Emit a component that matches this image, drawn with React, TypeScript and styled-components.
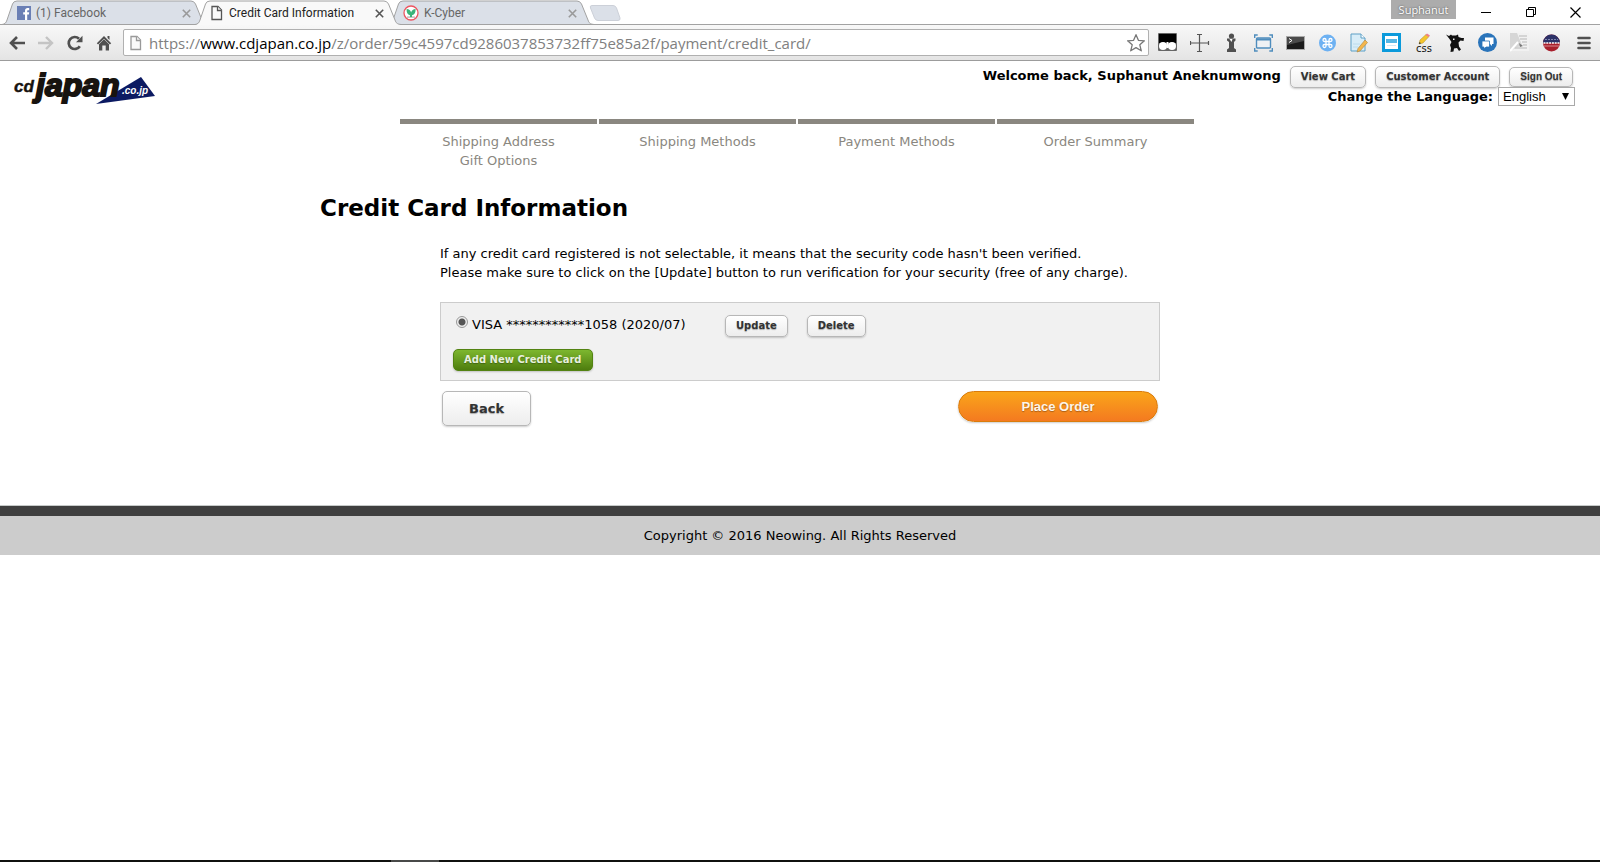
import React from 'react';
import styled, { createGlobalStyle, css } from 'styled-components';

const verdana = `Verdana, 'DejaVu Sans', sans-serif`;
const segoe = `'Segoe UI', 'Open Sans', 'Noto Sans', sans-serif`;
const arial = `Arial, 'Liberation Sans', sans-serif`;

const GlobalStyle = createGlobalStyle`
  *, *::before, *::after { box-sizing: border-box; }
  body { margin: 0; background: #fff; color: #000; font: 13px/19px ${verdana}; }
  button, select, input { margin: 0; font: inherit; }
  svg { display: block; flex: none; }
`;

const Screen = styled.div`
  display: flex;
  flex-direction: column;
  min-height: 100vh;
`;

/* ---------- browser chrome ---------- */

const TabStrip = styled.div`
  display: flex;
  height: 24px;
  padding: 0 2px;
  background: #fff;
  font: 12px/16px 'Segoe UI', Roboto, sans-serif;
`;

const TabBox = styled.div<{ $active?: boolean }>`
  position: relative;
  z-index: ${p => (p.$active ? 2 : 1)};
  display: flex;
  align-items: center;
  width: 193px;
  height: 25px;
  padding: 1px 1px 0 15px;
  gap: 5px;
  color: ${p => (p.$active ? '#222' : '#666')};
`;

const TabShape = styled.svg`
  position: absolute;
  z-index: -1;
  left: 0;
  top: 0;
`;

const TabTitle = styled.span`
  flex: 1;
  white-space: nowrap;
`;

const IconButton = styled.button`
  display: grid;
  place-items: center;
  width: 20px;
  height: 20px;
  padding: 0;
  border: 0;
  background: none;
  flex: none;
`;

const CloseButton = styled(IconButton)`
  width: 16px;
  height: 16px;
`;

const NewTab = styled(IconButton)`
  width: 32px;
  height: 16px;
  margin: 5px 0 0 8px;
`;

const WindowControls = styled.div`
  display: flex;
  align-items: flex-start;
  margin-left: auto;
`;

const UserBadge = styled.button`
  width: 65px;
  height: 19px;
  margin-right: 7px;
  padding: 0;
  border: 0;
  background: #acacac;
  color: #fff;
  font: 11px/18px ${segoe};
  text-shadow: 0 0 2px #444;
`;

const WindowButton = styled(IconButton)`
  width: 45px;
  height: 24px;
`;

const Toolbar = styled.div`
  display: flex;
  align-items: center;
  height: 37px;
  padding: 0 6px 0 7px;
  border-top: 1px solid #a2a2a2;
  border-bottom: 1px solid #9c9c9c;
  background: linear-gradient(#f8f8f8, #e4e4e4);
`;

const NavButtons = styled.div`
  display: flex;
  gap: 9px;
`;

const AddressBar = styled.div`
  display: flex;
  align-items: center;
  flex: 1;
  gap: 6px;
  height: 27px;
  margin: 0 9px;
  padding: 0 2px 0 5px;
  border: 1px solid #b0b0b0;
  border-radius: 2px;
  background: #fff;
`;

const Address = styled.div`
  flex: 1;
  color: #808080;
  font: 15px/24px ${segoe};
  white-space: nowrap;
  outline: 0;
  b { color: #000; font-weight: 400; }
`;

const Extensions = styled.div`
  display: flex;
  gap: 12px;
`;

/* ---------- shop page ---------- */

const Header = styled.header`
  display: flex;
  justify-content: space-between;
  align-items: flex-start;
  padding: 5px 25px 0 14px;
`;

const LogoLink = styled.a`
  display: block;
  margin-top: 4px;
`;

const Account = styled.div`
  display: flex;
  flex-direction: column;
  align-items: flex-end;
  font-weight: 700;
`;

const AccountRow = styled.div`
  display: flex;
  align-items: flex-start;
  height: 21px;
  padding-right: 2px;
  gap: 9px;
`;

const LanguageRow = styled.div`
  display: flex;
  align-items: center;
  gap: 5px;
`;

const SelectWrap = styled.span`
  position: relative;
  display: flex;
`;

const LanguageSelect = styled.select`
  appearance: none;
  width: 77px;
  height: 19px;
  padding: 0 4px;
  border: 1px solid #a9a9a9;
  border-radius: 0;
  background: #fff;
  color: #000;
  font: 13px/17px ${arial};
`;

const SelectArrow = styled.svg`
  position: absolute;
  right: 6px;
  top: 6px;
  pointer-events: none;
`;

const greyFace = css`
  border: 1px solid #b7b7b7;
  background: linear-gradient(#fff, #ededed);
  color: #333;
`;

const greenFace = css`
  border: 1px solid #538312;
  background: linear-gradient(#7db72f, #4e7d0e);
  color: #e8f0de;
`;

const ShopButton = styled.button<{ $tone?: 'green'; $size?: 'large' | 'small' }>`
  ${p => (p.$tone === 'green' ? greenFace : greyFace)}
  flex: none;
  height: ${p => (p.$size === 'large' ? 35 : p.$size === 'small' ? 20 : 22)}px;
  margin-top: ${p => (p.$size === 'small' ? 1 : 0)}px;
  padding: 0 ${p => (p.$size === 'large' ? 26 : 10)}px;
  border-radius: 5px;
  box-shadow: 0 1px 2px rgba(0, 0, 0, 0.2);
  font: 700 ${p => (p.$size === 'large' ? 13 : 10)}px/18px ${p => (p.$size === 'small' ? arial : verdana)};
  text-shadow: 0 1px 1px rgba(0, 0, 0, 0.3);
  white-space: nowrap;
`;

const OrderButton = styled.button`
  width: 200px;
  height: 31px;
  border: 1px solid #da7c0c;
  border-radius: 16px;
  background: linear-gradient(#faa51a, #f47a20);
  box-shadow: 0 1px 2px rgba(0, 0, 0, 0.2);
  color: #fef4e9;
  font: 700 13px/18px ${arial};
  text-shadow: 0 1px 1px rgba(0, 0, 0, 0.3);
`;

const Main = styled.main`
  width: 100%;
  max-width: 960px;
  margin: 11px auto 0;
`;

const Steps = styled.ol`
  display: grid;
  grid-template-columns: repeat(4, 1fr);
  gap: 2px;
  margin: 0 86px 0 80px;
  padding: 0;
  list-style: none;
`;

const Step = styled.li`
  padding-top: 8px;
  border-top: 5px solid #8a8780;
  color: #8a8780;
  text-align: center;
`;

const Title = styled.h1`
  margin: 22px 0 0;
  font-size: 23px;
  line-height: 32px;
`;

const Content = styled.form`
  display: block;
  margin: 20px 120px 0;
`;

const Note = styled.p`
  margin: 0 0 20px;
  white-space: nowrap;
`;

const CardBox = styled.div`
  display: flex;
  flex-direction: column;
  align-items: flex-start;
  gap: 12px;
  padding: 12px 12px 9px;
  border: 1px solid #ccc;
  background: #f1f1f1;
`;

const CardRow = styled.div`
  display: flex;
  align-items: center;
  gap: 19px;
`;

const CardChoice = styled.label`
  display: flex;
  align-items: center;
  gap: 4px;
  min-width: 253px;
  padding: 0 0 3px 3px;
`;

const Radio = styled.input`
  appearance: none;
  width: 12px;
  height: 12px;
  margin-bottom: 5px;
  border: 1px solid #999;
  border-radius: 50%;
  background: radial-gradient(circle, #555 0 3px, #eee 4px);
`;

const Actions = styled.div`
  display: flex;
  align-items: flex-start;
  justify-content: space-between;
  padding: 10px 2px 0;
`;

const Footer = styled.footer`
  margin-top: 80px;
  padding: 10px 0;
  border-top: 10px solid #3f3f3f;
  background: #ccc;
  box-shadow: 0 -1px #c6cac9;
  text-align: center;
`;

const TaskbarEdge = styled.div`
  height: 2px;
  margin-top: auto;
  padding-left: 391px;
  background: #10110f;
  &::before {
    content: '';
    display: block;
    width: 48px;
    height: 2px;
    background: #484a49;
  }
`;

/* ---------- drawings ---------- */

const PageIcon = ({ tone = '#555' }: { tone?: string }) => (
  <svg width="14" height="16" viewBox="0 0 14 16" fill="#fafafa" stroke={tone} strokeWidth="1.3">
    <path d="M2 1.5h6l3.5 3.5v9.5H2z" />
    <path d="M7.5 1.5v4h4" />
  </svg>
);

const FacebookIcon = () => (
  <svg width="14" height="14" viewBox="0 0 14 14">
    <rect width="14" height="14" fill="#6a7fb5" />
    <path d="M8 14V8.5H6.2V6.3H8V4.8C8 2.8 9.1 2 10.6 2h1.6v2.2h-1c-.8 0-1 .3-1 1v1.1h2l-.3 2.2h-1.7V14z" fill="#fff" />
  </svg>
);

const LeafIcon = () => (
  <svg width="16" height="16" viewBox="0 0 16 16">
    <circle cx="8" cy="8" r="7" fill="#fff" stroke="#ec5560" strokeWidth="1.3" />
    <path d="M4 11.300h8v1.700H4z" fill="#c4c4c4" />
    <path d="M7 12V10.300C4.500 9.800 3.500 7.500 3.600 4 6 4.100 7.700 5.300 8.100 7.500 8.700 5.400 10.200 4.200 12.600 4c.1 3.500-1 5.800-3.600 6.300V12z" fill="#3bb37a" />
  </svg>
);

const Cross = ({ tone }: { tone: string }) => (
  <svg width="9" height="9" viewBox="0 0 9 9" stroke={tone} strokeWidth="1.6">
    <path d="M.8.8l7.400 7.400M8.200.8L.8 8.200" />
  </svg>
);

function Tab({ title, icon, active }: { title: string; icon: React.ReactNode; active?: boolean }) {
  return (
    <TabBox $active={active}>
      <TabShape width="206" height="25" viewBox="0 0 206 25">
        <path
          d="M0 25C3 24 4 23 5 20L10.500 4Q11.500 1 15 1H189Q192 1 193.500 4L200 20C201 23 202 24 206 25Z"
          fill={active ? '#f9f9f9' : '#dbe0e8'}
        />
        <path
          d={
            'M0 24.500C3 24 4 23 5 20L10.500 4Q11.500 1 15 1H189Q192 1 193.500 4L200 20C201 23 202 24 206 24.500' +
            (active ? '' : 'H0')
          }
          fill="none"
          stroke="#a2a2a2"
        />
      </TabShape>
      {icon}
      <TabTitle>{title}</TabTitle>
      <CloseButton type="button" aria-label={`Close ${title}`}>
        <Cross tone={active ? '#555' : '#999'} />
      </CloseButton>
    </TabBox>
  );
}

const BackArrow = ({ tone }: { tone: string }) => (
  <svg width="16" height="14" viewBox="0 0 16 14" fill="none" stroke={tone} strokeWidth="2.6">
    <path d="M8 1L2 7l6 6M2.500 7H16" />
  </svg>
);

const ForwardArrow = () => (
  <svg width="16" height="14" viewBox="0 0 16 14" fill="none" stroke="#c4c4c4" strokeWidth="2.400">
    <path d="M8 1l6 6-6 6M13.500 7H0" />
  </svg>
);

const ReloadIcon = () => (
  <svg width="16" height="16" viewBox="0 0 16 16">
    <path d="M12.800 11.200A6 6 0 1 1 12 3.800" fill="none" stroke="#505050" strokeWidth="2.700" />
    <path d="M15.500.8v6.400H9z" fill="#505050" />
  </svg>
);

const HomeIcon = () => (
  <svg width="16" height="16" viewBox="0 0 16 16" fill="#505050">
    <path d="M8 1l7.200 7.200-1.300 1.300L8 3.700 2.100 9.500.8 8.200zM11.500 1H13.500V5l-2-2z" />
    <path d="M8 4.300l5 5V15.500H9.700V10.500H6.300v5H3V9.300z" />
  </svg>
);

const StarIcon = () => (
  <svg width="20" height="20" viewBox="0 0 20 20" fill="#fff" stroke="#777" strokeWidth="1.300" strokeLinejoin="round">
    <path d="M10 1.700l2.400 5.600 6 .5-4.600 4 1.500 6-5.300-3.200-5.300 3.200 1.500-6-4.600-4 6-.5z" />
  </svg>
);

const Ext = ({ children }: { children: React.ReactNode }) => (
  <svg width="20" height="20" viewBox="0 0 20 20">{children}</svg>
);

const extensions: { name: string; art: React.ReactNode }[] = [
  {
    name: 'Reader',
    art: (
      <>
        <rect x="0" y="0" width="19" height="18" rx="1" fill="#666" />
        <path d="M1 1h17v9H1z" fill="#000" />
        <path d="M9.500 9v6" stroke="#fff" strokeWidth="2" />
        <circle cx="5" cy="13" r="4" fill="#fff" />
        <circle cx="14" cy="13" r="4" fill="#fff" />
      </>
    ),
  },
  {
    name: 'Ruler',
    art: <path d="M0 10h19M9.500 1v18M7 1.500h5M7 18.500h5M.5 8v4M18.500 8v4" stroke="#555" strokeWidth="1.200" />,
  },
  {
    name: 'Info',
    art: (
      <g fill="#505050">
        <circle cx="9.500" cy="3" r="2.600" />
        <path d="M5 5.500h8.500v2L12 9v6l2 1.500V19H5v-2.500L7 15V9L5 7.500z" />
        <path d="M7.500 6l2 3 1-3z" fill="#fff" />
      </g>
    ),
  },
  {
    name: 'Capture',
    art: (
      <g fill="none" stroke="#4f8dbd" strokeWidth="1.400">
        <rect x="2.500" y="5" width="14" height="10" rx="1" fill="#eef1f4" />
        <path d="M2.500 6.500h14" strokeWidth="2" />
        <path d="M.7 5V2h3M15.300 2h3v3M18.300 15v3h-3M3.700 18h-3v-3" />
      </g>
    ),
  },
  {
    name: 'Terminal',
    art: (
      <>
        <rect x=".5" y="3.500" width="18" height="13" fill="#1b1b1b" stroke="#aaa" />
        <path d="M1 4h17v4L1 12z" fill="#4a4a4a" />
        <path d="M3 5.500l3 2-3 2" fill="none" stroke="#fff" />
      </>
    ),
  },
  {
    name: 'Shortcuts',
    art: (
      <>
        <circle cx="9.500" cy="10" r="8.500" fill="#6db1f2" />
        <path
          d="M8 8.500h3v3H8zM8 8.500H6.500A1.500 1.500 0 1 1 8 7zM11 8.500V7a1.500 1.500 0 1 1 1.500 1.500zM11 11.500h1.500A1.500 1.500 0 1 1 11 13zM8 11.500V13a1.500 1.500 0 1 1-1.500-1.500z"
          fill="none"
          stroke="#fff"
          strokeWidth="1.300"
        />
      </>
    ),
  },
  {
    name: 'Notes',
    art: (
      <>
        <path d="M1 1h10l4 4v13H1z" fill="#d8edf8" stroke="#5d9fc5" />
        <path d="M11 1v4h4" fill="#fff" stroke="#5d9fc5" />
        <path d="M3 11h7M3 14h5" stroke="#bcdcec" />
        <path d="M15 7l2.500 2.500L10 18l-3 1 1-3.500z" fill="#f4b64c" stroke="#a9843f" strokeWidth=".6" />
      </>
    ),
  },
  {
    name: 'Window',
    art: (
      <>
        <rect x="0" y="0" width="19" height="19" fill="#0b9adb" />
        <rect x="3" y="3" width="13" height="13" fill="#fff" />
        <rect x="4" y="6" width="11" height="4" fill="#55b6e4" />
        <path d="M5 12.500h9" stroke="#cfe9f6" />
      </>
    ),
  },
  {
    name: 'CSS editor',
    art: (
      <>
        <path d="M5 11l1-4 6-5.500 3 2L9 10z" fill="#f5c52c" stroke="#a98b2f" strokeWidth=".5" />
        <path d="M11.500 2L13 .5l3 2L14.500 4z" fill="#ee7f8a" />
        <path d="M5 11l.6-2 1.400 1.300z" fill="#222" />
        <text x="10" y="19" textAnchor="middle" fontFamily="'DejaVu Sans', sans-serif" fontSize="10" fill="#111">css</text>
      </>
    ),
  },
  {
    name: 'Cow',
    art: (
      <path
        d="M0 1.500l3 1.500 2-1.500 1 1h4l2-1 .5 2.500 3 1 2.500 0-.5 3-3-.5-2 2 .5 4 2 3-2 1.500-2-3-3 .5-.5 3-3 .5.500-4-1-3 1.500-3-2-3zM7 5.500V7h1.500V5.500z"
        fill="#111"
        fillRule="evenodd"
      />
    ),
  },
  {
    name: 'Chat',
    art: (
      <>
        <circle cx="9.500" cy="9.500" r="9.500" fill="#2a74ba" />
        <path d="M7 4.500h8.500v6.500H14v2l-2-2H7z" fill="#fff" />
        <path d="M4 8h7.500v6H8l-2 2v-2H4z" fill="#fff" stroke="#2a74ba" strokeWidth=".8" />
      </>
    ),
  },
  {
    name: 'Translate',
    art: (
      <>
        <rect x="0" y="0" width="19" height="18" fill="#f1f1f1" />
        <path d="M0 0h7l5 12-12 6z" fill="#d6d6d6" />
        <path d="M9 3h8M10 6h7M12 9h5M13 12h4M5 15h12" stroke="#cacaca" strokeWidth="1.300" />
        <path d="M0 18l8-9" stroke="#fff" strokeWidth="2" />
        <path d="M9 10l4 3-3 1z" fill="#777" />
      </>
    ),
  },
  {
    name: 'Flag',
    art: (
      <>
        <circle cx="9.500" cy="10" r="8.500" fill="#a81f2c" />
        <path d="M1 10a8.500 8.500 0 0 1 17 0z" fill="#2c3168" />
        <path d="M3 6.500h13" stroke="#7f83ad" strokeDasharray="2 1" />
        <path d="M1.500 10h16" stroke="#fff" strokeWidth="1.600" strokeDasharray="2 .8" />
        <path d="M2 13h15" stroke="#d98a90" />
      </>
    ),
  },
];

const Logo = () => (
  <svg width="142" height="38" viewBox="0 0 142 38" overflow="visible" role="img" aria-label="cdjapan.co.jp">
    <path d="M82 34L127 7l14 19z" fill="#0c1a62" />
    <g fontFamily="'Liberation Sans', Arial, sans-serif" fontWeight="700" fontStyle="italic">
      <text x="0" y="22" fontSize="17" fill="#17130f" stroke="#17130f" strokeWidth=".4">cd</text>
      <text x="22" y="26" fontSize="32" fill="#17130f" stroke="#17130f" strokeWidth="2">japan</text>
      <text x="108" y="24" fontSize="10" fill="#fff">.co.jp</text>
    </g>
  </svg>
);

const steps = ['Shipping Address\nGift Options', 'Shipping Methods', 'Payment Methods', 'Order Summary'];

export default function App() {
  return (
    <Screen>
      <GlobalStyle />
      <TabStrip>
        <Tab title="(1) Facebook" icon={<FacebookIcon />} />
        <Tab title="Credit Card Information" icon={<PageIcon />} active />
        <Tab title="K-Cyber" icon={<LeafIcon />} />
        <NewTab type="button" aria-label="New tab">
          <svg width="32" height="16" viewBox="0 0 32 16">
            <path d="M3 .5h21q2.500 0 3.500 2.500l3.500 10q.5 2.500-2 2.500H9q-2.500 0-3.500-2.500L1.500 3Q.5.5 3 .5z" fill="#dbe0e8" stroke="#ccd0d8" />
          </svg>
        </NewTab>
        <WindowControls>
          <UserBadge type="button">Suphanut</UserBadge>
          <WindowButton type="button" aria-label="Minimize">
            <svg width="10" height="10" viewBox="0 0 10 10"><path d="M0 5.500h10" stroke="#000" /></svg>
          </WindowButton>
          <WindowButton type="button" aria-label="Restore">
            <svg width="10" height="10" viewBox="0 0 10 10" fill="none" stroke="#000">
              <path d="M.5 2.500h7v7h-7zM2.500 2.500v-2h7v7h-2" />
            </svg>
          </WindowButton>
          <WindowButton type="button" aria-label="Close">
            <svg width="11" height="11" viewBox="0 0 11 11" stroke="#000" strokeWidth="1.200"><path d="M.5.5l10 10M10.500.5l-10 10" /></svg>
          </WindowButton>
        </WindowControls>
      </TabStrip>

      <Toolbar>
        <NavButtons>
          <IconButton type="button" aria-label="Back"><BackArrow tone="#505050" /></IconButton>
          <IconButton type="button" aria-label="Forward"><ForwardArrow /></IconButton>
          <IconButton type="button" aria-label="Reload"><ReloadIcon /></IconButton>
          <IconButton type="button" aria-label="Home"><HomeIcon /></IconButton>
        </NavButtons>
        <AddressBar>
          <PageIcon tone="#999" />
          <Address role="textbox" aria-label="Address" contentEditable suppressContentEditableWarning spellCheck={false}>
            https://<b>www.cdjapan.co.jp</b>/z/order/59c4597cd9286037853732ff75e85a2f/payment/credit_card/
          </Address>
          <IconButton type="button" aria-label="Bookmark this page"><StarIcon /></IconButton>
        </AddressBar>
        <Extensions>
          {extensions.map(e => (
            <IconButton type="button" key={e.name} aria-label={e.name}><Ext>{e.art}</Ext></IconButton>
          ))}
          <IconButton type="button" aria-label="Menu">
            <svg width="14" height="14" viewBox="0 0 14 14" stroke="#505050" strokeWidth="2.600" strokeLinecap="round">
              <path d="M1.500 2h11M1.500 7h11M1.500 12h11" />
            </svg>
          </IconButton>
        </Extensions>
      </Toolbar>

      <Header>
        <LogoLink href="#"><Logo /></LogoLink>
        <Account>
          <AccountRow>
            <span>Welcome back, Suphanut Aneknumwong</span>
            <ShopButton type="button">View Cart</ShopButton>
            <ShopButton type="button">Customer Account</ShopButton>
            <ShopButton type="button" $size="small">Sign Out</ShopButton>
          </AccountRow>
          <LanguageRow>
            <label htmlFor="language">Change the Language:</label>
            <SelectWrap>
              <LanguageSelect id="language" defaultValue="English">
                <option>English</option>
              </LanguageSelect>
              <SelectArrow width="7" height="7" viewBox="0 0 7 7"><path d="M0 0h7L3.500 7z" /></SelectArrow>
            </SelectWrap>
          </LanguageRow>
        </Account>
      </Header>

      <Main>
        <Steps>
          {steps.map(s => (
            <Step key={s}>
              {s.split('\n').map(line => <div key={line}>{line}</div>)}
            </Step>
          ))}
        </Steps>
        <Title>Credit Card Information</Title>
        <Content onSubmit={e => e.preventDefault()}>
          <Note>
            If any credit card registered is not selectable, it means that the security code hasn't been verified.
            <br />
            Please make sure to click on the [Update] button to run verification for your security (free of any charge).
          </Note>
          <CardBox>
            <CardRow>
              <CardChoice>
                <Radio type="radio" name="card" defaultChecked />
                VISA ************1058 (2020/07)
              </CardChoice>
              <ShopButton type="button">Update</ShopButton>
              <ShopButton type="button">Delete</ShopButton>
            </CardRow>
            <ShopButton type="button" $tone="green">Add New Credit Card</ShopButton>
          </CardBox>
          <Actions>
            <ShopButton type="button" $size="large">Back</ShopButton>
            <OrderButton type="submit">Place Order</OrderButton>
          </Actions>
        </Content>
      </Main>

      <Footer>Copyright © 2016 Neowing. All Rights Reserved</Footer>
      <TaskbarEdge />
    </Screen>
  );
}
